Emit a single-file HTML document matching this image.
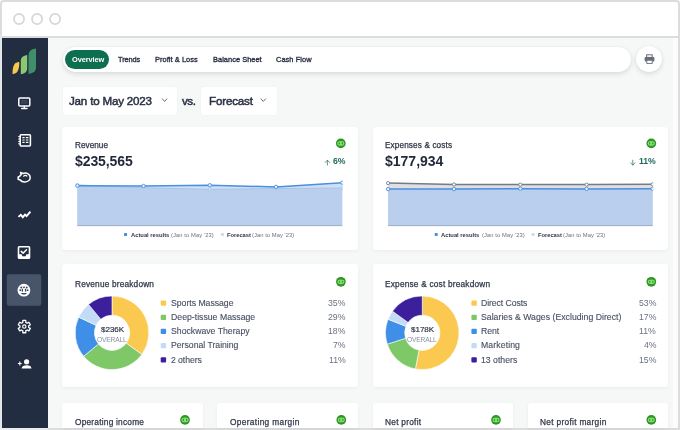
<!DOCTYPE html>
<html lang="en">
<head>
<meta charset="utf-8">
<title>Dashboard overview</title>
<style>
*{box-sizing:border-box;margin:0;padding:0}
html,body{width:680px;height:430px;overflow:hidden;background:#fff}
body{font-family:"Liberation Sans",sans-serif;color:#2b3245;position:relative}
.abs{position:absolute}
#frame{position:absolute;left:0;top:0;width:680px;height:430px;background:#dcdcdc;border-radius:4px 4px 0 0}
#chrome{position:absolute;left:2px;top:2px;width:676px;height:34px;background:#fff;border-radius:2px 2px 0 0}
#side{position:absolute;left:2px;top:38px;width:46px;height:390px;background:#232d41}
#main{position:absolute;left:48px;top:38px;width:630px;height:390px;background:#f6f8f7}
#scr{position:absolute;left:672.5px;top:38px;width:5.5px;height:390px;background:#fbfcfb}
.t{position:absolute;white-space:nowrap;line-height:1;will-change:transform}
#nav{position:absolute;left:63px;top:46.6px;width:568.4px;height:25.4px;border-radius:13px;background:#fff;box-shadow:0 2px 5px rgba(30,40,50,.13),0 0 2px rgba(30,40,50,.06)}
#ov{position:absolute;left:64.9px;top:49.8px;width:44.5px;height:18.8px;border-radius:9.5px;background:#0e6e50}
.nl{color:#2b3245;-webkit-text-stroke:.35px #2b3245}
#printb{position:absolute;left:636.3px;top:46.2px;width:26px;height:26px;border-radius:50%;background:#fff;box-shadow:0 2px 5px rgba(30,40,50,.13),0 0 2px rgba(30,40,50,.06)}
.dd{position:absolute;top:86.5px;height:28.5px;background:#fff;border-radius:3px;box-shadow:0 0 2px rgba(40,50,60,.05)}
.ddt{color:#2b3245;-webkit-text-stroke:.5px #2b3245}
.card{position:absolute;background:#fff;border-radius:3px;box-shadow:0 1px 3px rgba(40,50,60,.06)}
.ct{color:#2f3648;-webkit-text-stroke:.25px #2f3648}
.big{font-weight:bold;color:#1f2738}
.pct{font-weight:bold;color:#1f6b5c}
.lg{color:#6a7080}
.lgb{color:#2f3648;font-weight:bold}
.li{color:#474e62;-webkit-text-stroke:.12px #474e62}
.lp{color:#6b7282}
.dc1{color:#2f3648;-webkit-text-stroke:.2px #2f3648}
.dc2{color:#8a90a0}
</style>
</head>
<body>
<div id="frame"></div>
<div id="chrome"></div>
<div class="abs" style="left:0;top:35px;width:2px;height:395px;background:#e3e6eb"></div>
<div class="abs" style="left:0;top:428px;width:48px;height:2px;background:#e8ebef"></div>
<svg class="abs" style="left:10px;top:10px" width="54" height="18" viewBox="10 10 54 18" fill="#fff" stroke="#d7d7d7" stroke-width="1.7">
  <circle cx="19" cy="19" r="5.1"/><circle cx="37.1" cy="19" r="5.1"/><circle cx="55.1" cy="19" r="5.1"/>
</svg>
<div id="side"></div>
<div id="main"></div>
<div id="scr"></div>

<!-- SIDEBAR ICONS -->
<svg class="abs" style="left:2px;top:38px" width="46" height="390" viewBox="2 38 46 390" fill="none">
  <!-- logo -->
  <path d="M12.6 74.3 C12.3 69.5 13.2 65 15.6 63 L19.2 61.8 C19.5 66.4 18.6 71 16.2 73 Z" fill="#f6c84c"/>
  <path d="M20.8 74.2 L20.8 60.5 C20.8 58 22.6 56 25.2 55.4 L27.2 55 L27.2 68.6 C27.2 71.2 25.6 73.2 23 73.8 Z" fill="#8cc870"/>
  <path d="M28.5 73.9 L28.5 55 C28.5 52 30.5 49.8 33.5 49 L36 48.4 L36 67.2 C36 70.3 34.2 72.5 31.2 73.3 Z" fill="#3f8f68"/>
  <!-- active bg -->
  <rect x="6.8" y="274.2" width="34.4" height="31.5" rx="2.2" fill="#48546a"/>
  <!-- monitor -->
  <g stroke="#fff" stroke-width="1.5" stroke-linecap="round" stroke-linejoin="round">
    <rect x="18.8" y="97.9" width="11" height="8" rx="1"/>
    <path d="M24.3 106.2 V108.4 M21.6 108.6 H27"/>
  </g>
  <rect x="21" y="100" width="6.6" height="3.8" fill="#48546a" opacity=".6"/>
  <!-- notebook -->
  <g stroke="#fff">
    <rect x="20.2" y="134.7" width="10.2" height="11.2" rx=".8" stroke-width="1.55"/>
    <path d="M18.2 136.6 H20.4 M18.2 139 H20.4 M18.2 141.4 H20.4 M18.2 143.8 H20.4" stroke-width="1"/>
    <path d="M22.4 137.6 H24.6 M25.8 137.6 H28.4 M22.4 140 H24.6 M25.8 140 H28.4 M22.4 142.4 H24.6 M25.8 142.4 H28.4" stroke-width="1.15"/>
  </g>
  <!-- piggy -->
  <g stroke="#fff" stroke-width="1.55" stroke-linejoin="round" stroke-linecap="round">
    <path d="M21.2 174.6 L20.6 172.6 L23 173.4 C27 172.2 30.2 174.4 30.2 177.4 C30.2 180.2 27.6 182 24.6 182 C22.6 182 21 181.2 20.2 180 L18.2 179.2 L18.2 177 L19.6 176.4 C19.9 175.7 20.4 175.1 21.2 174.6 Z"/>
    <path d="M23.6 176.2 C24.6 175.3 26 175.3 26.8 176" stroke-width="1.2"/>
  </g>
  <!-- trend -->
  <path d="M18.4 216.9 L20.8 214.8 L22.8 217.2 L25 214.6 L26.6 216.2 L30.4 211.7" stroke="#fff" stroke-width="1.9" stroke-linejoin="miter" stroke-linecap="butt"/>
  <!-- inbox check -->
  <rect x="18.5" y="246.8" width="11" height="11.4" rx=".8" stroke="#fff" stroke-width="1.6"/>
  <path d="M18.5 254.3 H21.7 L22.4 256.2 H25.6 L26.3 254.3 H29.5 V258.2 H18.5 Z" fill="#fff"/>
  <path d="M21.2 251.4 L23.1 253.1 L26.5 249.8" stroke="#fff" stroke-width="1.5" stroke-linecap="round" stroke-linejoin="round"/>
  <!-- gauge -->
  <circle cx="23.9" cy="290.2" r="6.35" fill="#fff"/>
  <g fill="#3d485d">
    <path d="M22.9 285.9 L23.9 287.2 L24.9 285.9 L24.9 287.6 L23.9 288.4 L22.9 287.6 Z"/>
    <circle cx="21.2" cy="287.5" r=".95"/><circle cx="26.7" cy="287.5" r=".95"/>
    <circle cx="20.2" cy="290.2" r=".9"/><circle cx="27.6" cy="290.2" r=".9"/>
    <rect x="21.7" y="288.7" width="1.3" height="3" rx=".4"/><rect x="24.9" y="288.7" width="1.3" height="3" rx=".4"/>
    <path d="M20.9 293.1 H26.9 C25.9 295.1 21.9 295.1 20.9 293.1 Z"/>
  </g>
  <!-- gear -->
  <path d="M22.82 322.35 L22.86 320.47 L25.74 320.47 L25.78 322.35 L27.24 323.19 L28.89 322.29 L30.33 324.78 L28.72 325.76 L28.72 327.44 L30.33 328.42 L28.89 330.91 L27.24 330.01 L25.78 330.85 L25.74 332.73 L22.86 332.73 L22.82 330.85 L21.36 330.01 L19.71 330.91 L18.27 328.42 L19.88 327.44 L19.88 325.76 L18.27 324.78 L19.71 322.29 L21.36 323.19 Z" stroke="#fff" stroke-width="1.3" stroke-linejoin="round"/>
  <circle cx="24.3" cy="326.6" r="1.7" stroke="#fff" stroke-width="1.1"/>
  <!-- user plus -->
  <circle cx="26.6" cy="361.8" r="2.6" fill="#fff"/>
  <path d="M21.6 368.6 C21.6 366.4 23.6 365.2 26.6 365.2 C29.6 365.2 31.5 366.4 31.5 368.6 Z" fill="#fff"/>
  <path d="M19.8 361.6 V365.4 M17.9 363.5 H21.7" stroke="#fff" stroke-width="1.1"/>
</svg>

<!-- NAV -->
<div id="nav"></div>
<div id="ov"></div>
<div id="printb"></div>
<svg class="abs" style="left:643px;top:53px" width="13" height="12" viewBox="643 53 13 12" fill="none">
  <rect x="646.6" y="54.8" width="5.6" height="2.6" fill="none" stroke="#676d79" stroke-width="1"/>
  <rect x="644.6" y="57" width="9.8" height="4.6" rx="1" fill="#676d79"/>
  <rect x="646.8" y="60.2" width="5.4" height="3.2" fill="#fff" stroke="#676d79" stroke-width=".9"/>
</svg>

<!-- DROPDOWNS -->
<div class="dd" style="left:62.5px;width:114.4px"></div>
<div class="dd" style="left:201.4px;width:75.2px"></div>
<svg class="abs" style="left:160px;top:96px" width="110" height="10" viewBox="160 96 110 10" fill="none" stroke="#555b68" stroke-width=".9" stroke-linecap="round" stroke-linejoin="round">
  <path d="M162.3 98.9 L164.6 101.4 L166.9 98.9"/>
  <path d="M261 98.9 L263.3 101.4 L265.6 98.9"/>
</svg>

<!-- CARDS -->
<div class="card" style="left:62px;top:126.6px;width:296.2px;height:123.2px"></div>
<div class="card" style="left:373px;top:126.6px;width:295.1px;height:123.2px"></div>
<div class="card" style="left:62px;top:264px;width:296.2px;height:123.4px"></div>
<div class="card" style="left:373px;top:264px;width:295.1px;height:123.4px"></div>
<div class="card" style="left:62px;top:403.2px;width:141px;height:24.8px;border-radius:3px 3px 0 0"></div>
<div class="card" style="left:217px;top:403.2px;width:141.2px;height:24.8px;border-radius:3px 3px 0 0"></div>
<div class="card" style="left:372.8px;top:403.2px;width:140.2px;height:24.8px;border-radius:3px 3px 0 0"></div>
<div class="card" style="left:528px;top:403.2px;width:140.2px;height:24.8px;border-radius:3px 3px 0 0"></div>

<svg class="abs" style="left:48px;top:38px" width="630" height="390" viewBox="48 38 630 390" fill="none">
<clipPath id="clp1"><rect x="74.3" y="170" width="268.5" height="60"/></clipPath><g clip-path="url(#clp1)"><polygon points="77.3,185.7 143.5,186.0 209.8,185.2 276.0,186.9 342.3,182.7 342.3,225.6 77.3,225.6" fill="#cfe0f6"/>
<polygon points="77.3,184.9 143.5,187.8 209.8,189.3 276.0,188.6 342.3,188.0 342.3,225.6 77.3,225.6" fill="#b9cfed"/>
<polyline points="77.3,184.9 143.5,187.8 209.8,189.3 276.0,188.6 342.3,188.0" fill="none" stroke="#a9c3e6" stroke-width="1"/>
<polyline points="77.3,185.7 143.5,186.0 209.8,185.2 276.0,186.9 342.3,182.7" fill="none" stroke="#4a8fe0" stroke-width="1.5"/>
<circle cx="77.3" cy="184.9" r="1.4" fill="#cfe0f6" stroke="#a9c3e6" stroke-width=".7"/>
<circle cx="143.5" cy="187.8" r="1.4" fill="#cfe0f6" stroke="#a9c3e6" stroke-width=".7"/>
<circle cx="209.8" cy="189.3" r="1.4" fill="#cfe0f6" stroke="#a9c3e6" stroke-width=".7"/>
<circle cx="276.0" cy="188.6" r="1.4" fill="#cfe0f6" stroke="#a9c3e6" stroke-width=".7"/>
<circle cx="342.3" cy="188.0" r="1.4" fill="#cfe0f6" stroke="#a9c3e6" stroke-width=".7"/>
<circle cx="77.3" cy="185.7" r="1.7" fill="#eaf3fd" stroke="#4a8fe0" stroke-width=".9"/>
<circle cx="143.5" cy="186.0" r="1.7" fill="#eaf3fd" stroke="#4a8fe0" stroke-width=".9"/>
<circle cx="209.8" cy="185.2" r="1.7" fill="#eaf3fd" stroke="#4a8fe0" stroke-width=".9"/>
<circle cx="276.0" cy="186.9" r="1.7" fill="#eaf3fd" stroke="#4a8fe0" stroke-width=".9"/>
<circle cx="342.3" cy="182.7" r="1.7" fill="#eaf3fd" stroke="#4a8fe0" stroke-width=".9"/>
<line x1="77.3" y1="225.6" x2="342.3" y2="225.6" stroke="#93a6c4" stroke-width=".9"/></g>
<clipPath id="clp2"><rect x="385.1" y="170" width="268.1" height="60"/></clipPath><g clip-path="url(#clp2)"><polygon points="388.1,183.1 454.0,184.4 520.3,184.6 586.6,184.6 652.7,184.3 652.7,225.6 388.1,225.6" fill="#dedfe1"/>
<polygon points="388.1,189.1 454.0,189.1 520.3,188.7 586.6,188.9 652.7,188.8 652.7,225.6 388.1,225.6" fill="#b9cfed"/>
<polyline points="388.1,183.1 454.0,184.4 520.3,184.6 586.6,184.6 652.7,184.3" fill="none" stroke="#757b84" stroke-width="1.5"/>
<polyline points="388.1,189.1 454.0,189.1 520.3,188.7 586.6,188.9 652.7,188.8" fill="none" stroke="#4a8fe0" stroke-width="1.5"/>
<circle cx="388.1" cy="183.1" r="1.6" fill="#fff" stroke="#6d737c" stroke-width=".8"/>
<circle cx="454.0" cy="184.4" r="1.6" fill="#fff" stroke="#6d737c" stroke-width=".8"/>
<circle cx="520.3" cy="184.6" r="1.6" fill="#fff" stroke="#6d737c" stroke-width=".8"/>
<circle cx="586.6" cy="184.6" r="1.6" fill="#fff" stroke="#6d737c" stroke-width=".8"/>
<circle cx="652.7" cy="184.3" r="1.6" fill="#fff" stroke="#6d737c" stroke-width=".8"/>
<circle cx="388.1" cy="189.1" r="1.7" fill="#eaf3fd" stroke="#4a8fe0" stroke-width=".9"/>
<circle cx="454.0" cy="189.1" r="1.7" fill="#eaf3fd" stroke="#4a8fe0" stroke-width=".9"/>
<circle cx="520.3" cy="188.7" r="1.7" fill="#eaf3fd" stroke="#4a8fe0" stroke-width=".9"/>
<circle cx="586.6" cy="188.9" r="1.7" fill="#eaf3fd" stroke="#4a8fe0" stroke-width=".9"/>
<circle cx="652.7" cy="188.8" r="1.7" fill="#eaf3fd" stroke="#4a8fe0" stroke-width=".9"/>
<line x1="388.1" y1="225.6" x2="652.7" y2="225.6" stroke="#93a6c4" stroke-width=".9"/></g>
<path d="M112.00 296.00 A36.80 36.80 0 0 1 141.77 354.43 L126.24 343.15 A17.60 17.60 0 0 0 112.00 315.20 Z" fill="#fbc950" stroke="#fff" stroke-width=".6" stroke-linejoin="round"/>
<path d="M141.77 354.43 A36.80 36.80 0 0 1 83.65 356.26 L98.44 344.02 A17.60 17.60 0 0 0 126.24 343.15 Z" fill="#7fc868" stroke="#fff" stroke-width=".6" stroke-linejoin="round"/>
<path d="M83.65 356.26 A36.80 36.80 0 0 1 78.70 317.13 L96.08 325.31 A17.60 17.60 0 0 0 98.44 344.02 Z" fill="#3f8ee8" stroke="#fff" stroke-width=".6" stroke-linejoin="round"/>
<path d="M78.70 317.13 A36.80 36.80 0 0 1 88.54 304.45 L100.78 319.24 A17.60 17.60 0 0 0 96.08 325.31 Z" fill="#c4dbf6" stroke="#fff" stroke-width=".6" stroke-linejoin="round"/>
<path d="M88.54 304.45 A36.80 36.80 0 0 1 112.00 296.00 L112.00 315.20 A17.60 17.60 0 0 0 100.78 319.24 Z" fill="#3c1f9b" stroke="#fff" stroke-width=".6" stroke-linejoin="round"/>
<path d="M422.30 296.00 A36.80 36.80 0 1 1 415.40 368.95 L419.00 350.09 A17.60 17.60 0 1 0 422.30 315.20 Z" fill="#fbc950" stroke="#fff" stroke-width=".6" stroke-linejoin="round"/>
<path d="M415.40 368.95 A36.80 36.80 0 0 1 387.30 344.17 L405.56 338.24 A17.60 17.60 0 0 0 419.00 350.09 Z" fill="#7fc868" stroke="#fff" stroke-width=".6" stroke-linejoin="round"/>
<path d="M387.30 344.17 A36.80 36.80 0 0 1 388.08 319.25 L405.94 326.32 A17.60 17.60 0 0 0 405.56 338.24 Z" fill="#3f8ee8" stroke="#fff" stroke-width=".6" stroke-linejoin="round"/>
<path d="M388.08 319.25 A36.80 36.80 0 0 1 392.53 311.17 L408.06 322.45 A17.60 17.60 0 0 0 405.94 326.32 Z" fill="#c4dbf6" stroke="#fff" stroke-width=".6" stroke-linejoin="round"/>
<path d="M392.53 311.17 A36.80 36.80 0 0 1 422.30 296.00 L422.30 315.20 A17.60 17.60 0 0 0 408.06 322.45 Z" fill="#3c1f9b" stroke="#fff" stroke-width=".6" stroke-linejoin="round"/>
<rect x="160.7" y="300.5" width="5.4" height="5.2" rx="1" fill="#fbc950"/>
<rect x="471.4" y="300.5" width="5.4" height="5.2" rx="1" fill="#fbc950"/>
<rect x="160.7" y="314.7" width="5.4" height="5.2" rx="1" fill="#7fc868"/>
<rect x="471.4" y="314.7" width="5.4" height="5.2" rx="1" fill="#7fc868"/>
<rect x="160.7" y="328.8" width="5.4" height="5.2" rx="1" fill="#3f8ee8"/>
<rect x="471.4" y="328.8" width="5.4" height="5.2" rx="1" fill="#3f8ee8"/>
<rect x="160.7" y="343.1" width="5.4" height="5.2" rx="1" fill="#c4dbf6"/>
<rect x="471.4" y="343.1" width="5.4" height="5.2" rx="1" fill="#c4dbf6"/>
<rect x="160.7" y="357.3" width="5.4" height="5.2" rx="1" fill="#3c1f9b"/>
<rect x="471.4" y="357.3" width="5.4" height="5.2" rx="1" fill="#3c1f9b"/>
<rect x="124.0" y="233" width="3" height="3" rx=".5" fill="#4a8fe0"/>
<rect x="220.9" y="233" width="3" height="3" rx=".5" fill="#d3dbe8"/>
<rect x="434.7" y="233" width="3" height="3" rx=".5" fill="#4a8fe0"/>
<rect x="531.6" y="233" width="3" height="3" rx=".5" fill="#d3dbe8"/>
<g transform="translate(340.8 143.4)"><circle r="4.85" fill="#2c9524"/><ellipse rx="3.5" ry="2.4" fill="#86dd75"/><ellipse cx="-1.55" rx=".6" ry="1.05" fill="#2a8f24"/><ellipse cx="1.55" rx=".6" ry="1.05" fill="#2a8f24"/></g><g transform="translate(651.3 143.4)"><circle r="4.85" fill="#2c9524"/><ellipse rx="3.5" ry="2.4" fill="#86dd75"/><ellipse cx="-1.55" rx=".6" ry="1.05" fill="#2a8f24"/><ellipse cx="1.55" rx=".6" ry="1.05" fill="#2a8f24"/></g><g transform="translate(340.9 281.8)"><circle r="4.85" fill="#2c9524"/><ellipse rx="3.5" ry="2.4" fill="#86dd75"/><ellipse cx="-1.55" rx=".6" ry="1.05" fill="#2a8f24"/><ellipse cx="1.55" rx=".6" ry="1.05" fill="#2a8f24"/></g><g transform="translate(651.3 281.8)"><circle r="4.85" fill="#2c9524"/><ellipse rx="3.5" ry="2.4" fill="#86dd75"/><ellipse cx="-1.55" rx=".6" ry="1.05" fill="#2a8f24"/><ellipse cx="1.55" rx=".6" ry="1.05" fill="#2a8f24"/></g><g transform="translate(185.0 419.9)"><circle r="4.85" fill="#2c9524"/><ellipse rx="3.5" ry="2.4" fill="#86dd75"/><ellipse cx="-1.55" rx=".6" ry="1.05" fill="#2a8f24"/><ellipse cx="1.55" rx=".6" ry="1.05" fill="#2a8f24"/></g><g transform="translate(341.3 419.9)"><circle r="4.85" fill="#2c9524"/><ellipse rx="3.5" ry="2.4" fill="#86dd75"/><ellipse cx="-1.55" rx=".6" ry="1.05" fill="#2a8f24"/><ellipse cx="1.55" rx=".6" ry="1.05" fill="#2a8f24"/></g><g transform="translate(496.0 419.9)"><circle r="4.85" fill="#2c9524"/><ellipse rx="3.5" ry="2.4" fill="#86dd75"/><ellipse cx="-1.55" rx=".6" ry="1.05" fill="#2a8f24"/><ellipse cx="1.55" rx=".6" ry="1.05" fill="#2a8f24"/></g><g transform="translate(651.3 419.9)"><circle r="4.85" fill="#2c9524"/><ellipse rx="3.5" ry="2.4" fill="#86dd75"/><ellipse cx="-1.55" rx=".6" ry="1.05" fill="#2a8f24"/><ellipse cx="1.55" rx=".6" ry="1.05" fill="#2a8f24"/></g>
  <!-- arrows -->
  <path d="M327.4 165.1 V160.3 M325.2 162.5 L327.4 160.2 L329.6 162.5" stroke="#3a796d" stroke-width=".8" stroke-linecap="round" stroke-linejoin="round"/>
  <path d="M632.8 160.2 V165 M630.6 162.8 L632.8 165.1 L635 162.8" stroke="#3a796d" stroke-width=".8" stroke-linecap="round" stroke-linejoin="round"/>
</svg>

<span class="t nl" id="n1" style="left:71.5px;top:55.51px;font-size:7.4px;letter-spacing:-0.10px;color:#fff;font-weight:bold;-webkit-text-stroke:0">Overview</span>
<span class="t nl" id="n2" style="left:118.3px;top:55.51px;font-size:7.4px;letter-spacing:-0.10px">Trends</span>
<span class="t nl" id="n3" style="left:155.3px;top:55.51px;font-size:7.4px;letter-spacing:0.07px">Profit &amp; Loss</span>
<span class="t nl" id="n4" style="left:212.7px;top:55.51px;font-size:7.4px;letter-spacing:0.05px">Balance Sheet</span>
<span class="t nl" id="n5" style="left:275.7px;top:55.51px;font-size:7.4px;letter-spacing:0.07px">Cash Flow</span>
<span class="t ddt" id="d1" style="left:69.4px;top:94.51px;font-size:11.6px;letter-spacing:-0.19px">Jan to May 2023</span>
<span class="t ddt" id="d2" style="left:182.4px;top:94.51px;font-size:11.6px;letter-spacing:-0.45px">vs.</span>
<span class="t ddt" id="d3" style="left:208.5px;top:94.51px;font-size:11.6px;letter-spacing:-0.17px">Forecast</span>
<span class="t ct" id="c1" style="left:74.8px;top:142.21px;font-size:8.2px;letter-spacing:0.03px">Revenue</span>
<span class="t ct" id="c2" style="left:384.8px;top:142.21px;font-size:8.2px;letter-spacing:0.13px">Expenses &amp; costs</span>
<span class="t big" id="b1" style="left:74.8px;top:154.40px;font-size:14.0px;letter-spacing:-0.09px">$235,565</span>
<span class="t big" id="b2" style="left:384.8px;top:154.40px;font-size:14.0px;letter-spacing:-0.00px">$177,934</span>
<span class="t pct" id="p1" style="left:332.8px;top:156.91px;font-size:8.7px;letter-spacing:-0.17px">6%</span>
<span class="t pct" id="p2" style="left:638.8px;top:156.91px;font-size:8.7px;letter-spacing:-0.05px">11%</span>
<span class="t ct" id="c3" style="left:75.0px;top:279.71px;font-size:8.3px;letter-spacing:0.18px">Revenue breakdown</span>
<span class="t ct" id="c4" style="left:384.8px;top:279.71px;font-size:8.3px;letter-spacing:0.20px">Expense &amp; cost breakdown</span>
<span class="t ct" id="c5" style="left:74.8px;top:417.91px;font-size:8.3px;letter-spacing:0.23px">Operating income</span>
<span class="t ct" id="c6" style="left:229.8px;top:417.91px;font-size:8.3px;letter-spacing:0.35px">Operating margin</span>
<span class="t ct" id="c7" style="left:385.0px;top:417.91px;font-size:8.3px;letter-spacing:0.27px">Net profit</span>
<span class="t ct" id="c8" style="left:540.2px;top:417.91px;font-size:8.3px;letter-spacing:0.31px">Net profit margin</span>
<span class="t li" id="l10" style="left:170.8px;top:298.80px;font-size:8.7px;letter-spacing:-0.02px">Sports Massage</span>
<span class="t lp" id="q10" style="right:334.4px;top:298.80px;font-size:8.7px">35%</span>
<span class="t li" id="l11" style="left:170.8px;top:313.02px;font-size:8.7px;letter-spacing:0.01px">Deep-tissue Massage</span>
<span class="t lp" id="q11" style="right:334.4px;top:313.02px;font-size:8.7px">29%</span>
<span class="t li" id="l12" style="left:170.8px;top:327.11px;font-size:8.7px;letter-spacing:0.00px">Shockwave Therapy</span>
<span class="t lp" id="q12" style="right:334.4px;top:327.11px;font-size:8.7px">18%</span>
<span class="t li" id="l13" style="left:170.8px;top:341.41px;font-size:8.7px;letter-spacing:-0.01px">Personal Training</span>
<span class="t lp" id="q13" style="right:334.4px;top:341.41px;font-size:8.7px">7%</span>
<span class="t li" id="l14" style="left:170.8px;top:355.61px;font-size:8.7px;letter-spacing:-0.08px">2 others</span>
<span class="t lp" id="q14" style="right:334.4px;top:355.61px;font-size:8.7px">11%</span>
<span class="t li" id="l20" style="left:480.9px;top:298.80px;font-size:8.7px;letter-spacing:-0.08px">Direct Costs</span>
<span class="t lp" id="q20" style="right:23.8px;top:298.80px;font-size:8.7px">53%</span>
<span class="t li" id="l21" style="left:480.9px;top:313.02px;font-size:8.7px;letter-spacing:0.02px">Salaries &amp; Wages (Excluding Direct)</span>
<span class="t lp" id="q21" style="right:23.8px;top:313.02px;font-size:8.7px">17%</span>
<span class="t li" id="l22" style="left:480.9px;top:327.11px;font-size:8.7px;letter-spacing:-0.10px">Rent</span>
<span class="t lp" id="q22" style="right:23.8px;top:327.11px;font-size:8.7px">11%</span>
<span class="t li" id="l23" style="left:480.9px;top:341.41px;font-size:8.7px;letter-spacing:0.10px">Marketing</span>
<span class="t lp" id="q23" style="right:23.8px;top:341.41px;font-size:8.7px">4%</span>
<span class="t li" id="l24" style="left:480.9px;top:355.61px;font-size:8.7px;letter-spacing:-0.00px">13 others</span>
<span class="t lp" id="q24" style="right:23.8px;top:355.61px;font-size:8.7px">15%</span>
<span class="t dc1" id="o1" style="left:100.5px;top:326.01px;font-size:8.0px;letter-spacing:-0.01px">$236K</span>
<span class="t dc2" id="o2" style="left:97.0px;top:337.00px;font-size:6.7px;letter-spacing:-0.18px">OVERALL</span>
<span class="t dc1" id="o3" style="left:410.8px;top:326.01px;font-size:8.0px;letter-spacing:-0.01px">$178K</span>
<span class="t dc2" id="o4" style="left:407.3px;top:337.00px;font-size:6.7px;letter-spacing:-0.18px">OVERALL</span>
<span class="t lg lgb" id="g0a" style="left:130.6px;top:232.51px;font-size:5.8px;letter-spacing:0.00px">Actual results</span>
<span class="t lg" id="g0b" style="left:171.0px;top:232.51px;font-size:5.8px;letter-spacing:0.09px">(Jan to May '23)</span>
<span class="t lg lgb" id="g0c" style="left:227.0px;top:232.51px;font-size:5.8px;letter-spacing:-0.04px">Forecast</span>
<span class="t lg" id="g0d" style="left:252.4px;top:232.51px;font-size:5.8px;letter-spacing:0.06px">(Jan to May '23)</span>
<span class="t lg lgb" id="g1a" style="left:441.3px;top:232.51px;font-size:5.8px;letter-spacing:0.00px">Actual results</span>
<span class="t lg" id="g1b" style="left:481.7px;top:232.51px;font-size:5.8px;letter-spacing:0.09px">(Jan to May '23)</span>
<span class="t lg lgb" id="g1c" style="left:537.7px;top:232.51px;font-size:5.8px;letter-spacing:-0.04px">Forecast</span>
<span class="t lg" id="g1d" style="left:563.1px;top:232.51px;font-size:5.8px;letter-spacing:0.06px">(Jan to May '23)</span>

</body>
</html>
